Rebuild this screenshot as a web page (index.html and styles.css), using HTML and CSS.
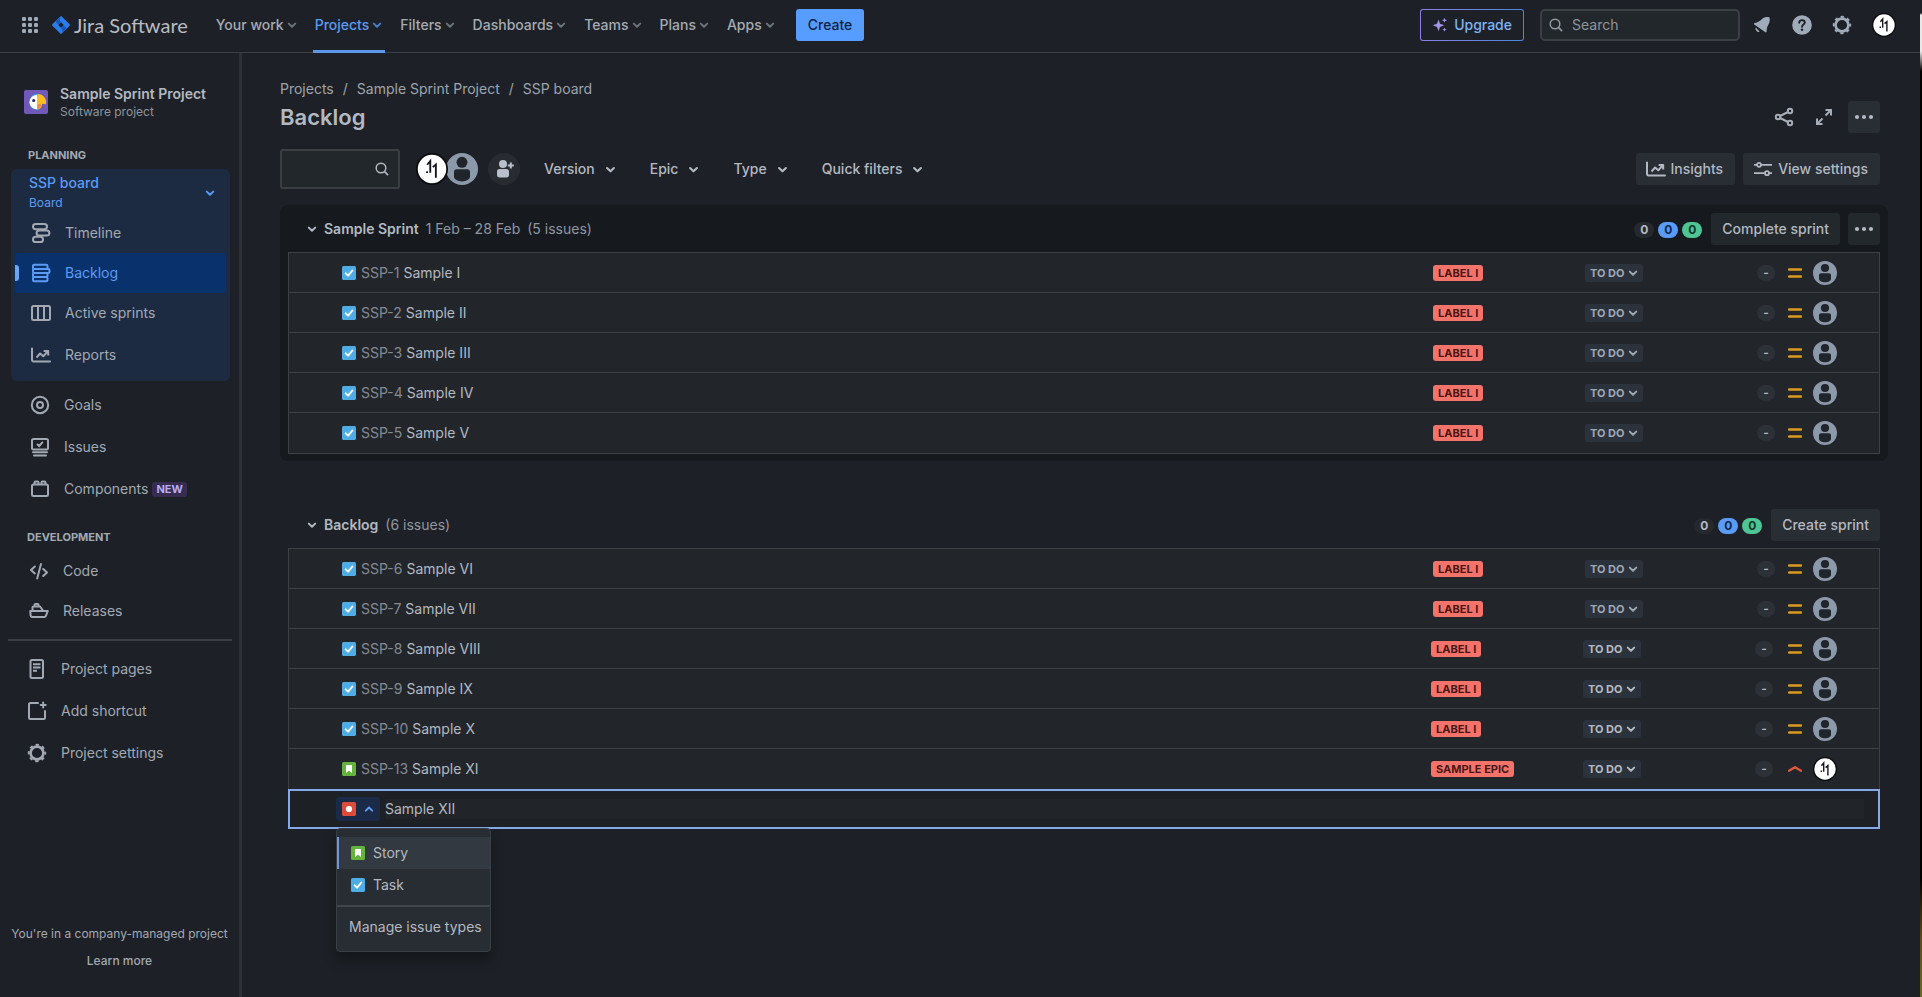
FILE: index.html
```html
<!DOCTYPE html>
<html lang="en">
<head>
<meta charset="utf-8">
<title>Backlog - Sample Sprint Project - Jira Software</title>
<link rel="stylesheet" href="styles.css">
</head>
<body>
<svg class="sprite" aria-hidden="true">
  <symbol id="chev" viewBox="0 0 16 16"><path d="M4.800 6.600 8 9.700l3.200-3.100" fill="none" stroke="currentColor" stroke-width="2" stroke-linecap="round" stroke-linejoin="round"/></symbol>
  <symbol id="chev-up" viewBox="0 0 16 16"><path d="M4.800 9.600 8 6.500l3.200 3.100" fill="none" stroke="currentColor" stroke-width="2" stroke-linecap="round" stroke-linejoin="round"/></symbol>
  <symbol id="search" viewBox="0 0 16 16"><circle cx="7" cy="7" r="4.800" fill="none" stroke="currentColor" stroke-width="1.500"/><path d="m10.600 10.600 3 3" stroke="currentColor" stroke-width="1.600" stroke-linecap="round"/></symbol>
  <symbol id="dots" viewBox="0 0 24 24"><circle cx="5" cy="12" r="2.100" fill="currentColor"/><circle cx="12" cy="12" r="2.100" fill="currentColor"/><circle cx="19" cy="12" r="2.100" fill="currentColor"/></symbol>
  <symbol id="task" viewBox="0 0 14 14"><rect width="14" height="14" rx="1.600" fill="#4fade6"/><path d="m3.700 7.300 2.400 2.400 4.300-5.200" fill="none" stroke="#fff" stroke-width="1.900" stroke-linecap="round" stroke-linejoin="round"/></symbol>
  <symbol id="story" viewBox="0 0 14 14"><rect width="14" height="14" rx="1.600" fill="#64b33c"/><path d="M4 3.600c0-.4.300-.7.700-.7h4.600c.4 0 .7.300.7.700V11L7 8.500 4 11z" fill="#fff"/></symbol>
  <symbol id="bug" viewBox="0 0 14 14"><rect width="14" height="14" rx="1.600" fill="#dd4c3b"/><circle cx="7" cy="7" r="3.100" fill="#fff"/></symbol>
  <symbol id="medium" viewBox="0 0 14 14"><path d="M1 3.500h12M1 10.500h12" stroke="#dd9a1e" stroke-width="2.400" stroke-linecap="round"/></symbol>
  <symbol id="high" viewBox="0 0 14 14"><path d="M1 8.800 7 5.200l6 3.600" fill="none" stroke="#dc5a3c" stroke-width="2.200" stroke-linecap="round" stroke-linejoin="round"/></symbol>
  <symbol id="person" viewBox="0 0 24 24"><circle cx="12" cy="12" r="12" fill="#8c99aa"/><circle cx="12" cy="7" r="4.100" fill="#20252b"/><path d="M6 14.200c0-1.200.9-2 2-2h8c1.100 0 2 .8 2 2v3.500c0 2-2.800 3.600-6 3.600s-6-1.600-6-3.600z" fill="#20252b"/></symbol>
  <symbol id="eleven" viewBox="0 0 24 24"><circle cx="12" cy="12" r="12" fill="#090a0c"/><circle cx="12" cy="12" r="10.700" fill="#fff"/><path d="M8.400 8.800 10.700 6v8.800M12.600 10.600l2.300-2v9.900M8.300 13.600v1.400" fill="none" stroke="#15171a" stroke-width="1.400"/></symbol>
  <symbol id="gear" viewBox="0 0 20 20"><circle cx="10" cy="10" r="6.400" fill="none" stroke="currentColor" stroke-width="2.600"/><circle cx="10" cy="10" r="8.200" fill="none" stroke="currentColor" stroke-width="2" stroke-dasharray="3.220 3.220" stroke-dashoffset="1.610"/></symbol>
  <symbol id="chart" viewBox="0 0 20 20"><path d="M1 3.500v11.600c0 .8.600 1.400 1.400 1.400H19" fill="none" stroke="currentColor" stroke-width="2" stroke-linecap="round"/><path d="m5.500 12.500 3.600-4 3.200 2.800L16.500 6.500M12.600 6h4.600v4.500" fill="none" stroke="currentColor" stroke-width="2" stroke-linejoin="round"/></symbol>
</svg>

<div class="app">
  <header class="topbar">
    <button class="icon-btn switcher" aria-label="App switcher"><svg width="16" height="16" viewBox="0 0 16 16" fill="currentColor"><rect width="4" height="4" rx="1.300"/><rect x="6" width="4" height="4" rx="1.300"/><rect x="12" width="4" height="4" rx="1.300"/><rect y="6" width="4" height="4" rx="1.300"/><rect x="6" y="6" width="4" height="4" rx="1.300"/><rect x="12" y="6" width="4" height="4" rx="1.300"/><rect y="12" width="4" height="4" rx="1.300"/><rect x="6" y="12" width="4" height="4" rx="1.300"/><rect x="12" y="12" width="4" height="4" rx="1.300"/></svg></button>
    <a class="brand" href="#"><svg width="18" height="18" viewBox="0 0 18 18"><path fill="#2b7de9" fill-rule="evenodd" d="M8.300.4a1 1 0 0 1 1.400 0l7.900 7.900a1 1 0 0 1 0 1.400l-7.900 7.900a1 1 0 0 1-1.400 0L.4 9.700a1 1 0 0 1 0-1.400zM9 6.300 6.300 9 9 11.700 11.700 9z"/><path fill="#1558bc" d="M9 6.300C7.300 4.700 7.200 2.200 9 .300L3.800 5.500 6.300 9zM9 11.700c1.700 1.600 1.800 4.100 0 6l5.200-5.200L11.700 9z"/></svg><span>Jira Software</span></a>
    <nav class="mainnav">
      <button>Your work<svg><use href="#chev"/></svg></button>
      <button class="current">Projects<svg><use href="#chev"/></svg></button>
      <button>Filters<svg><use href="#chev"/></svg></button>
      <button>Dashboards<svg><use href="#chev"/></svg></button>
      <button>Teams<svg><use href="#chev"/></svg></button>
      <button>Plans<svg><use href="#chev"/></svg></button>
      <button>Apps<svg><use href="#chev"/></svg></button>
    </nav>
    <button class="create">Create</button>
    <div class="top-right">
      <button class="upgrade"><svg width="16" height="16" viewBox="0 0 16 16" fill="#a193e8"><path d="M6.500 2.500 8 6.700 12.300 8.300 8 9.900 6.500 14.200 5 9.900.7 8.300 5 6.700z"/><path d="m12.500.8.700 1.800 1.800.7-1.800.7-.7 1.800-.7-1.800-1.800-.7 1.800-.7zM12.500 10.500l.6 1.500 1.500.6-1.500.6-.6 1.500-.6-1.500-1.500-.6 1.500-.6z"/></svg>Upgrade</button>
      <label class="search"><svg width="16" height="16"><use href="#search"/></svg><input type="search" placeholder="Search" aria-label="Search"></label>
      <button class="icon-btn" aria-label="Notifications"><svg width="20" height="20" viewBox="0 0 20 20" fill="currentColor"><path d="M10 4c2-1.900 4.700-2.100 6.300-1.900.9.100 1.300.6 1.400 1.400.2 1.600 0 4.200-1.500 6.500-1 1.600-1.500 3.500-1.600 6.500-.1.800-.9 1.200-1.500.6L2.200 9.500c-.5-.5-.3-1.300.5-1.500C5.800 7.500 8 6 10 4zM3.700 12.600l3.900 3.900a2.100 2.100 0 0 1-3.100-.7 2.500 2.500 0 0 1-.8-3.200z"/></svg></button>
      <button class="icon-btn" aria-label="Help"><svg width="20" height="20" viewBox="0 0 20 20"><circle cx="10" cy="10" r="9.800" fill="currentColor"/><path d="M7.200 7.800c0-1.700 1.200-2.700 2.800-2.700s2.800 1 2.800 2.500c0 1.900-2.800 2-2.800 4.200" fill="none" stroke="#1d2127" stroke-width="1.900" stroke-linecap="round"/><circle cx="10" cy="14.800" r="1.200" fill="#1d2127"/></svg></button>
      <button class="icon-btn" aria-label="Settings"><svg width="20" height="20"><use href="#gear"/></svg></button>
      <button class="icon-btn profile" aria-label="Your profile"><svg width="24" height="24"><use href="#eleven"/></svg></button>
    </div>
  </header>

  <div class="body">
    <aside class="sidebar">
      <div class="project">
        <svg width="24" height="24" viewBox="0 0 24 24"><rect width="24" height="24" rx="2" fill="#7059b8"/><path d="M13.500 3.700a8.300 8.300 0 1 0 0 16.600z" fill="#2aa7dc"/><path d="M13.500 5a7.200 7.200 0 1 0 0 14.300z" fill="#fff"/><path d="M13.500 4c5 0 8 3.500 8.500 7 .3 1.800 0 3-.8 3.500-.9-.9-2-1-3-.6-.2 3-1.700 5.100-4.700 5.500z" fill="#fcbe1f"/><path d="M13.500 14.500c1.600-.6 3-.5 4.300.3-.8 2.500-2.200 4-4.300 4.600z" fill="#ef8b3c"/><circle cx="9.700" cy="10.500" r="1.600" fill="#2b2d5c"/></svg>
        <div><div class="project-name">Sample Sprint Project</div><div class="project-kind">Software project</div></div>
      </div>
      <h2 class="side-head">PLANNING</h2>
      <div class="board-group">
        <button class="board-switch"><span><b>SSP board</b><small>Board</small></span><svg width="16" height="16"><use href="#chev"/></svg></button>
        <a class="item" href="#"><svg viewBox="0 0 20 20"><g fill="none" stroke="currentColor" stroke-width="2"><rect x="2" y="1" width="14" height="5.200" rx="2.600"/><rect x="5.600" y="7.400" width="12.800" height="5.200" rx="2.600"/><rect x="2" y="13.800" width="10" height="5.200" rx="2.600"/></g></svg>Timeline</a>
        <a class="item selected" href="#" aria-current="page"><svg viewBox="0 0 20 20"><g fill="none" stroke="currentColor" stroke-width="2"><rect x="2" y="1.800" width="14.500" height="4.200" rx="1.300"/><rect x="2" y="6" width="16.500" height="4" rx="1.300"/><rect x="2" y="10" width="14.500" height="4" rx="1.300"/><rect x="2" y="14" width="14.500" height="4.200" rx="1.300"/></g></svg>Backlog</a>
        <a class="item" href="#"><svg viewBox="0 0 20 20"><g fill="none" stroke="currentColor" stroke-width="2"><rect x="1" y="3" width="18" height="14" rx="1.500"/><path d="M7 3v14M13 3v14"/></g></svg>Active sprints</a>
        <a class="item taller" href="#"><svg viewBox="0 0 20 20"><use href="#chart"/></svg>Reports</a>
      </div>
      <nav class="side-list planning">
        <a class="item tall" href="#"><svg viewBox="0 0 20 20"><g fill="none" stroke="currentColor" stroke-width="2"><circle cx="10" cy="10" r="8.200"/><circle cx="10" cy="10" r="3"/></g></svg>Goals</a>
        <a class="item tall" href="#"><svg viewBox="0 0 20 20"><g fill="none" stroke="currentColor" stroke-width="2" stroke-linecap="round"><rect x="2" y="2" width="16" height="10.500" rx="1.500"/><path d="M3 15.200h14M4 18.600h12M7.500 7.500 9.200 9l3.200-3.600"/></g></svg>Issues</a>
        <a class="item tall" href="#"><svg viewBox="0 0 20 20"><g fill="none" stroke="currentColor" stroke-width="2"><rect x="2" y="5.500" width="16" height="11.500" rx="1.500"/><path d="M4.500 5V3.500c0-.6.400-1 1-1h2c.6 0 1 .4 1 1V5M11.500 5V3.500c0-.6.400-1 1-1h2c.6 0 1 .4 1 1V5"/></g></svg>Components<span class="new">NEW</span></a>
      </nav>
      <h2 class="side-head dev">DEVELOPMENT</h2>
      <nav class="side-list dev-list">
        <a class="item" href="#"><svg viewBox="0 0 20 20"><path d="M5.800 5.500 2 9l3.800 3.500M14.200 8 18 11.500 14.200 15M12 3 8.200 17.500" fill="none" stroke="currentColor" stroke-width="2" stroke-linecap="round" stroke-linejoin="round"/></svg>Code</a>
        <a class="item" href="#"><svg viewBox="0 0 20 20"><path d="M1.300 10h17.500L17 14.700c-.3.800-.8 1.200-1.700 1.200H3c-.8 0-1.300-.4-1.400-1.200zM3.500 9.500v-3c0-.6.400-1 1-1H11l3 4M5.500 5.500V4c0-.6.400-1 1-1h2c.6 0 1 .4 1 1v1.500" fill="none" stroke="currentColor" stroke-width="2" stroke-linejoin="round"/></svg>Releases</a>
      </nav>
      <nav class="side-list project-list">
        <a class="item tall" href="#"><svg viewBox="0 0 20 20"><g fill="none" stroke="currentColor" stroke-width="2"><rect x="3.500" y="1" width="12.500" height="18" rx="1.500"/><path d="M6 5.300h7.500M6 8.500h7.500M6 11.700h4"/></g></svg>Project pages</a>
        <a class="item tall" href="#"><svg viewBox="0 0 20 20"><g fill="none" stroke="currentColor" stroke-width="2" stroke-linecap="round"><path d="M11 2H3.500C2.600 2 2 2.600 2 3.500v13c0 .9.600 1.500 1.500 1.500h13c.9 0 1.500-.6 1.500-1.500V10M16.200 1.500v5M13.700 4h5"/></g></svg>Add shortcut</a>
        <a class="item tall" href="#"><svg viewBox="0 0 20 20"><use href="#gear"/></svg>Project settings</a>
      </nav>
      <div class="side-foot"><p>You're in a company-managed project</p><a href="#">Learn more</a></div>
    </aside>

    <main class="main">
      <nav class="crumbs"><a href="#">Projects</a><span>/</span><a href="#">Sample Sprint Project</a><span>/</span><a href="#">SSP board</a></nav>
      <div class="title-row">
        <h1>Backlog</h1>
        <div class="title-actions">
          <button class="ghost" aria-label="Share"><svg width="20" height="20" viewBox="0 0 20 20" fill="none" stroke="currentColor" stroke-width="2"><circle cx="4" cy="10" r="2.200"/><circle cx="16" cy="4" r="2.200"/><circle cx="16" cy="16" r="2.200"/><path d="m6 9 8-4M6 11l8 4"/></svg></button>
          <button class="ghost" aria-label="Full screen"><svg width="18" height="18" viewBox="0 0 18 18" fill="none" stroke="currentColor" stroke-width="2"><path d="M10.500 2H16v5.500M16 2l-5.500 5.500M7.500 16H2v-5.500M2 16l5.500-5.500"/></svg></button>
          <button class="square" aria-label="More actions"><svg width="24" height="24"><use href="#dots"/></svg></button>
        </div>
      </div>
      <div class="toolbar">
        <label class="board-search"><input type="text" aria-label="Search backlog"><svg width="16" height="16"><use href="#search"/></svg></label>
        <div class="people"><svg width="32" height="32"><use href="#eleven"/></svg><svg width="32" height="32"><use href="#person"/></svg></div>
        <button class="add-people" aria-label="Add people"><svg width="20" height="20" viewBox="0 0 20 20" fill="currentColor"><circle cx="9" cy="5" r="4"/><path d="M3 12.500C3 11 4 10 5.500 10h7C14 10 15 11 15 12.500V16c0 1.500-1 2.500-2.500 2.500h-7C4 18.500 3 17.500 3 16z"/><path d="M16.800 3.500v6M13.800 6.500h6" stroke="currentColor" stroke-width="2"/></svg></button>
        <div class="filters">
          <button>Version<svg><use href="#chev"/></svg></button>
          <button>Epic<svg><use href="#chev"/></svg></button>
          <button>Type<svg><use href="#chev"/></svg></button>
          <button>Quick filters<svg><use href="#chev"/></svg></button>
        </div>
        <div class="toolbar-right">
          <button class="solid"><svg width="20" height="20"><use href="#chart"/></svg>Insights</button>
          <button class="solid"><svg width="20" height="20" viewBox="0 0 20 20" fill="none" stroke="currentColor" stroke-width="1.800"><circle cx="6" cy="5.800" r="2"/><path d="M1 5.800h3M8 5.800h11"/><circle cx="14" cy="14.200" r="2"/><path d="M1 14.200h11M16 14.200h3"/></svg>View settings</button>
        </div>
      </div>

      <section class="sprint" aria-label="Sample Sprint">
        <div class="list-head">
          <button class="toggle" aria-label="Collapse"><svg><use href="#chev"/></svg></button>
          <h3>Sample Sprint</h3><span class="meta">1 Feb – 28 Feb</span><span class="meta">(5 issues)</span>
          <div class="pills"><span>0</span><span class="blue">0</span><span class="green">0</span></div>
          <button class="solid raised">Complete sprint</button>
          <button class="square raised" aria-label="Sprint actions"><svg width="24" height="24"><use href="#dots"/></svg></button>
        </div>
        <ul class="issues" id="sprint-issues"></ul>
      </section>

      <section class="sprint backlog" aria-label="Backlog">
        <div class="list-head">
          <button class="toggle" aria-label="Collapse"><svg><use href="#chev"/></svg></button>
          <h3>Backlog</h3><span class="meta">(6 issues)</span>
          <div class="pills"><span>0</span><span class="blue">0</span><span class="green">0</span></div>
          <button class="solid">Create sprint</button>
        </div>
        <ul class="issues" id="backlog-issues"></ul>
        <form class="new-issue">
          <button type="button" class="type-picker" aria-label="Issue type" aria-expanded="true"><svg class="type"><use href="#bug"/></svg><svg class="caret"><use href="#chev-up"/></svg></button>
          <input type="text" value="Sample XII" aria-label="Issue summary">
          <div class="menu">
            <button type="button" class="active"><svg class="type"><use href="#story"/></svg>Story</button>
            <button type="button"><svg class="type"><use href="#task"/></svg>Task</button>
            <hr>
            <button type="button" class="manage">Manage issue types</button>
          </div>
        </form>
      </section>
    </main>
  </div>
</div>
<script src="app.js"></script>
</body>
</html>
```
FILE: styles.css
```css
* { box-sizing: border-box; }
body {
  margin: 0;
  background: #1d2127;
  color: #b3b9c2;
  font: 14px/20px Inter, "Liberation Sans", sans-serif;
}
button, input { font: inherit; color: inherit; }
button { border: 0; background: none; padding: 0; display: flex; align-items: center; }
a { color: inherit; text-decoration: none; }
h1, h2, h3, p, ul { margin: 0; padding: 0; }
svg { display: block; flex: none; }
.sprite { position: absolute; width: 0; height: 0; }
.app {
  min-height: 100vh;
  display: flex;
  flex-direction: column;
  border: 0 solid;
  border-right-width: 2px;
  border-image: linear-gradient(#1d2127 14px, #e8e8e8 16px, #e8e8e8 52px, #000 72px, #000 88%, #5c4a1c 94%, #6a6a22) 1;
}

.topbar { height: 53px; display: flex; align-items: center; padding: 0 24px 3px 12px; border-bottom: 1px solid #3b3f45; }
.icon-btn { color: #a0abba; justify-content: center; }
.switcher { width: 36px; }
.brand { display: flex; align-items: center; gap: 4px; margin: 0 28px 0 4px; color: #b8bcc3; font: 20px/24px Lato, sans-serif; }
.mainnav { display: flex; gap: 15px; align-self: stretch; margin-bottom: -4px; }
.mainnav button { position: relative; padding-bottom: 4px; font-weight: 500; color: #a6abb3; }
.mainnav svg { width: 16px; height: 16px; color: #6d737b; }
.mainnav .current { color: #5b9bf5; }
.mainnav .current svg { color: #467dc4; }
.mainnav .current::after { content: ""; position: absolute; left: -2px; right: 0; bottom: 0; height: 3px; background: #5b98ea; }
.create { height: 32px; margin-left: 18px; padding: 0 12px; border-radius: 3px; background: #579dff; color: #10233f; font-weight: 500; }
.top-right { display: flex; align-items: center; margin-left: auto; gap: 16px; }
.top-right .icon-btn { width: 24px; }
.search + .icon-btn { margin-left: -6px; }
.top-right .profile { margin-left: 2px; }
.upgrade { height: 32px; padding: 0 11px; gap: 6px; border: 1px solid transparent; border-radius: 3px; color: #7fb2f5; font-weight: 500;
  background: linear-gradient(#1d2127, #1d2127) padding-box, linear-gradient(90deg, #8f7ee7, #4a87dc) border-box; }
.search { display: flex; align-items: center; gap: 8px; width: 200px; height: 32px; padding: 0 8px 0 6px; border: 2px solid #3b4045; border-radius: 5px; background: #22272b; color: #9299a2; }
.search input { width: 100%; min-width: 0; padding: 0; border: 0; outline: 0; background: none; }
.search input::placeholder { color: #8f959e; opacity: 1; }

.body { flex: 1; display: flex; }
.sidebar { width: 242px; display: flex; flex-direction: column; border-right: 3px solid #2c3138; color: #a2a9b3; }
.project { display: flex; align-items: center; gap: 12px; padding: 31px 8px 0 24px; }
.project-name { font-weight: 600; color: #b3b9c2; }
.project-kind { font-size: 12px; line-height: 16px; color: #8d949e; }
.side-head { margin: 27px 0 6px 28px; font-size: 11px; line-height: 16px; font-weight: 700; }
.board-group { margin: 0 9px 0 11px; padding: 4px 4px 4px; border-radius: 6px; background: #1c2b41; }
.board-switch { width: 100%; padding: 0 8px 0 14px; justify-content: space-between; text-align: left; color: #5b9bf5; }
.board-switch b { display: block; font-weight: 500; }
.board-switch small { display: block; font-size: 12px; line-height: 20px; }
.item { position: relative; display: flex; align-items: center; gap: 14px; height: 40px; padding-left: 16px; }
.item svg { width: 20px; height: 20px; }
.item.tall { height: 42px; }
.item.taller { height: 44px; }
.selected { border-radius: 3px; background: #09326c; color: #5b9bf5; }
.selected::before { content: ""; position: absolute; left: 0; top: 12px; width: 4px; height: 16px; border-radius: 0 3px 3px 0; background: #6ba3f5; }
.planning { padding: 3px 8px 0 14px; }
.new { margin-left: -10px; padding: 0 4px; border-radius: 3px; background: #352c4f; color: #b8acf6; font-size: 11px; line-height: 15px; font-weight: 700; }
.side-head.dev { margin: 19px 0 6px 27px; }
.dev-list { margin: 0 7px 0 8px; padding: 0 0 8px 5px; border-bottom: 2px solid #3a3e43; }
.project-list { padding: 7px 8px 0 11px; }
.side-foot { margin-top: auto; padding-bottom: 26px; text-align: center; font-size: 12px; line-height: 20px; }
.side-foot a { display: inline-block; margin-top: 7px; font-weight: 500; }

.main { flex: 1; min-width: 0; padding: 26px 32px 40px 38px; }
.crumbs { display: flex; gap: 9px; color: #9ea4ad; }
.title-row { display: flex; align-items: center; justify-content: space-between; margin: 2px 8px 16px 0; }
h1 { font-size: 22px; line-height: 28px; font-weight: 600; color: #b3b9c2; }
.title-actions, .toolbar-right { display: flex; gap: 8px; }
.ghost, .square { width: 32px; height: 32px; justify-content: center; border-radius: 3px; color: #a6adb7; }
.square { background: #292d34; color: #b3b9c2; }
.toolbar { display: flex; align-items: center; margin-right: 8px; }
.board-search { display: flex; align-items: center; width: 120px; height: 40px; padding-right: 8px; border: 2px solid #3a3e43; border-radius: 3px; background: #22272b; }
.board-search input { flex: 1; min-width: 0; border: 0; outline: 0; background: none; }
.people { display: flex; margin: 0 10px 0 16px; }
.people svg + svg { margin-left: -2px; }
.people svg:first-child { position: relative; z-index: 1; }
.add-people { width: 32px; height: 32px; justify-content: center; border-radius: 50%; background: #282c32; color: #b9c0cb; }
.filters { display: flex; gap: 7px; margin-left: 14px; }
.filters button { height: 32px; gap: 7px; padding: 0 14px 0 10px; font-weight: 500; }
.filters svg { width: 17px; height: 17px; }
.toolbar-right { margin-left: auto; }
.solid { height: 32px; gap: 5px; padding: 0 12px; border-radius: 3px; background: #292d34; font-weight: 500; }
.list-head .solid { padding: 0 11px; }
.toolbar-right .solid { padding-left: 10px; }
.list-head .raised { background: #22282c; }

.sprint { margin-top: 16px; padding: 8px 8px 7px; border-radius: 8px; background: #161a1f; }
.list-head { display: flex; align-items: center; height: 32px; margin-bottom: 7px; padding-left: 14px; }
.toggle { padding: 0 2px; }
.toggle svg { width: 16px; height: 16px; }
.list-head h3 { margin-left: 2px; font-size: 14px; font-weight: 600; }
.meta { margin-left: 7px; color: #9096a0; }
.pills { display: flex; gap: 4px; margin: 2px 9px 0 auto; }
.pills span { width: 20px; height: 16px; border-radius: 8px; background: #25292e; font-size: 12px; line-height: 16px; font-weight: 700; text-align: center; }
.pills .blue { background: #5b9bf8; color: #10294d; }
.pills .green { background: #4fc495; color: #10392a; }
.list-head .square { margin-left: 8px; }
.issues { list-style: none; border: 1px solid #3c4146; background: #22262b; }
.issue { display: flex; align-items: center; height: 40px; padding: 0 42px 0 53px; border-bottom: 1px solid #3c4146; }
.issue:last-child { border-bottom: 0; }
.type { width: 14px; height: 14px; }
.key { margin: 0 4px 0 5px; color: #848a93; }
.summary { flex: 1; }
.epic { display: flex; width: 152px; }
.epic span { padding: 0 5px; border-radius: 3px; background: #f3736b; color: #4b1613; font-size: 11px; line-height: 16px; font-weight: 700; }
.status { width: 172px; }
.status button { height: 18px; padding: 0 4px 0 5px; border-radius: 3px; background: #2c323b; color: #9fa7b3; font-size: 11px; font-weight: 700; }
.status svg { width: 16px; height: 16px; margin-right: -2px; }
.points { width: 18px; height: 16px; margin-right: 13px; border-radius: 8px; background: #2c3138; font-size: 12px; line-height: 16px; font-weight: 600; text-align: center; }
.priority { width: 14px; height: 14px; }
.assignee { width: 24px; height: 24px; margin-left: 11px; }
.shifted .points { margin-right: 15px; }
.shifted .status button { color: #b3bac4; }

.backlog { margin-top: 40px; background: none; }
.backlog .issues { border-bottom: 0; }
.new-issue { position: relative; display: flex; align-items: center; height: 40px; padding: 0 14px 0 46px; border: 2px solid #85a9e6; background: #1d2125; }
.type-picker { height: 24px; gap: 5px; padding: 0 3px 0 6px; border-radius: 3px; background: #1b2a46; color: #5b9bf5; }
.type-picker .caret { width: 16px; height: 16px; }
.new-issue input { flex: 1; height: 20px; margin-left: 5px; padding: 0; border: 0; outline: 0; background: #212529; }
.menu { position: absolute; left: 46px; top: 37px; padding: 8px 0; border: 1px solid #3a4047; border-radius: 4px; background: #282d33; box-shadow: 0 8px 12px rgba(0, 0, 0, .35); }
.menu button { width: 100%; height: 32px; gap: 8px; padding: 0 8px 0 12px; border-left: 2px solid transparent; white-space: nowrap; }
.menu .active { border-left-color: #6a97dd; background: #333940; }
.menu hr { height: 2px; margin: 4px 0; border: 0; background: #41464c; }
.menu .manage { padding-left: 10px; }
```
FILE: app.js
```javascript
const icon = (id, cls) => `<svg class="${cls}"><use href="#${id}"/></svg>`;

const row = ([key, summary, opts = {}]) => `
  <li class="issue${opts.shifted ? " shifted" : ""}">
    ${icon(opts.type || "task", "type")}
    <a class="key" href="#">${key}</a>
    <span class="summary">${summary}</span>
    <div class="epic"><span>${opts.epic || "LABEL I"}</span></div>
    <div class="status"><button>TO DO${icon("chev", "")}</button></div>
    <span class="points">-</span>
    ${icon(opts.priority || "medium", "priority")}
    ${icon(opts.assignee || "person", "assignee")}
  </li>`;

const sprint = [
  ["SSP-1", "Sample I"],
  ["SSP-2", "Sample II"],
  ["SSP-3", "Sample III"],
  ["SSP-4", "Sample IV"],
  ["SSP-5", "Sample V"],
];

const backlog = [
  ["SSP-6", "Sample VI"],
  ["SSP-7", "Sample VII"],
  ["SSP-8", "Sample VIII", { shifted: true }],
  ["SSP-9", "Sample IX", { shifted: true }],
  ["SSP-10", "Sample X", { shifted: true }],
  ["SSP-13", "Sample XI", { shifted: true, type: "story", epic: "SAMPLE EPIC", priority: "high", assignee: "eleven" }],
];

document.getElementById("sprint-issues").innerHTML = sprint.map(row).join("");
document.getElementById("backlog-issues").innerHTML = backlog.map(row).join("");
```
